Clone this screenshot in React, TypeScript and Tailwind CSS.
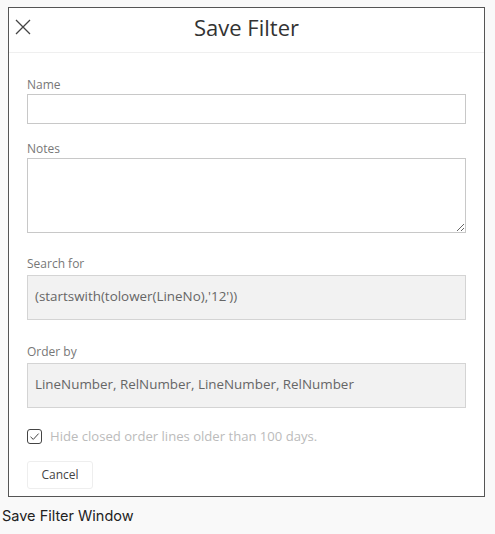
import { useState } from "react";

function CloseIcon() {
  return (
    <svg width="16" height="16" viewBox="0 0 16 16" className="text-[#444]">
      <path d="M1 1 L15 15 M15 1 L1 15" stroke="currentColor" strokeWidth="1.3" fill="none" />
    </svg>
  );
}

function CheckBox({ checked, onChange }: { checked: boolean; onChange: () => void }) {
  return (
    <button
      onClick={onChange}
      className="w-[15px] h-[15px] rounded-[3px] border border-[#444] flex items-center justify-center bg-white"
    >
      {checked && (
        <svg width="11" height="11" viewBox="0 0 11 11">
          <path d="M1.5 5.8 L4.3 8.4 L9.6 2.6" stroke="#444" strokeWidth="1" fill="none" />
        </svg>
      )}
    </button>
  );
}

export default function App() {
  const [hideClosed, setHideClosed] = useState(true);

  return (
    <div className="h-[534px] bg-[#f9f9f9] pt-[7px] font-['Open_Sans',sans-serif]">
      <div className="ml-[8px] w-[477px] h-[490px] bg-white border border-[#555]">
        <div className="relative h-[45px] border-b border-[#efefef] flex items-center justify-center pb-[6px]">
          <button className="absolute left-[6px] top-[11px] p-0">
            <CloseIcon />
          </button>
          <h1 className="text-[22px] text-[#333] leading-none">Save Filter</h1>
        </div>

        <div className="px-[18px] pt-[24px]">
          <label className="block text-[12px] leading-[16px] text-[#777]">Name</label>
          <input className="mt-[1px] block w-full h-[30px] border border-[#c8c8c8] outline-none" />

          <label className="block mt-[17px] text-[12px] leading-[16px] text-[#777]">Notes</label>
          <textarea className="mt-[1px] block w-full h-[75px] border border-[#c8c8c8] outline-none resize-y" />

          <label className="block mt-[23px] text-[12px] leading-[16px] text-[#777]">Search for</label>
          <div className="mt-[3px] h-[45px] bg-[#f2f2f2] border border-[#d4d4d4] px-[7px] pb-[2px] flex items-center text-[13.4px] text-[#666]">
            (startswith(tolower(LineNo),'12'))
          </div>

          <label className="block mt-[24px] text-[12px] leading-[16px] text-[#777]">Order by</label>
          <div className="mt-[3px] h-[45px] bg-[#f2f2f2] border border-[#d4d4d4] px-[7px] pb-[2px] flex items-center text-[13.4px] text-[#666]">
            LineNumber, RelNumber, LineNumber, RelNumber
          </div>

          <div className="mt-[19px] flex items-center gap-[8px]">
            <CheckBox checked={hideClosed} onChange={() => setHideClosed(!hideClosed)} />
            <span className="text-[13.1px] text-[#bbb] leading-[18px]">Hide closed order lines older than 100 days.</span>
          </div>

          <button className="mt-[16px] w-[66px] h-[28px] rounded-[3px] border border-[#eee] bg-white text-[12px] text-[#444]">
            Cancel
          </button>
        </div>
      </div>
      <p className="mt-[10px] ml-[2px] text-[14.5px] leading-[18px] text-[#222] font-['Inter',sans-serif]">Save Filter Window</p>
    </div>
  );
}
